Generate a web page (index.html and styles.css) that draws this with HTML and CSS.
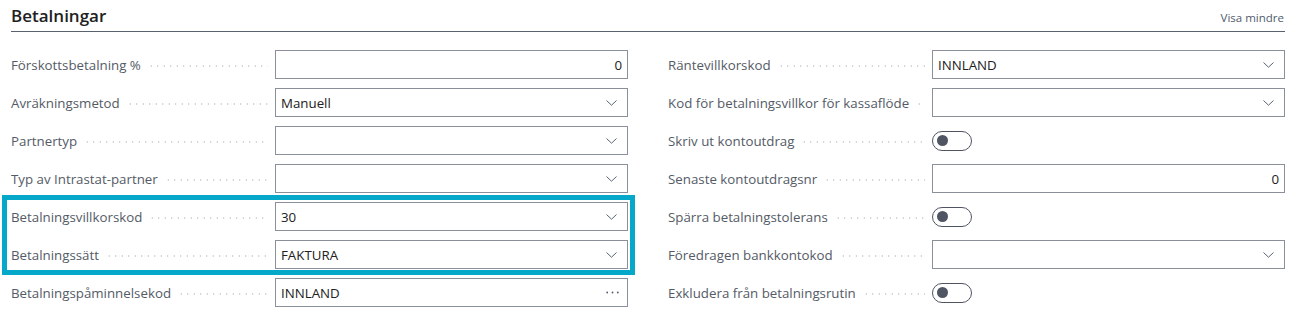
FILE: index.html
```html
<!DOCTYPE html>
<html lang="sv">
<head>
<meta charset="utf-8">
<title>Betalningar</title>
<link rel="stylesheet" href="styles.css">
</head>
<body>
<div class="page">
  <header class="section-head">
    <h2 class="title">Betalningar</h2>
    <a class="more">Visa mindre</a>
  </header>
  <div class="grid">
    <div class="col">
      <div class="row">
        <div class="cap"><span class="label">Förskottsbetalning %</span><span class="lead"></span></div>
        <div class="field num"><span class="val">0</span></div>
      </div>
      <div class="row">
        <div class="cap"><span class="label">Avräkningsmetod</span><span class="lead"></span></div>
        <div class="field"><span class="val">Manuell</span><svg class="chev" viewBox="0 0 11 6"><polyline points="0.5,0.5 5.5,5.2 10.5,0.5"/></svg></div>
      </div>
      <div class="row">
        <div class="cap"><span class="label">Partnertyp</span><span class="lead"></span></div>
        <div class="field"><span class="val"></span><svg class="chev" viewBox="0 0 11 6"><polyline points="0.5,0.5 5.5,5.2 10.5,0.5"/></svg></div>
      </div>
      <div class="row">
        <div class="cap"><span class="label">Typ av Intrastat-partner</span><span class="lead"></span></div>
        <div class="field"><span class="val"></span><svg class="chev" viewBox="0 0 11 6"><polyline points="0.5,0.5 5.5,5.2 10.5,0.5"/></svg></div>
      </div>
      <div class="highlight">
        <div class="row">
          <div class="cap"><span class="label">Betalningsvillkorskod</span><span class="lead"></span></div>
          <div class="field"><span class="val">30</span><svg class="chev" viewBox="0 0 11 6"><polyline points="0.5,0.5 5.5,5.2 10.5,0.5"/></svg></div>
        </div>
        <div class="row">
          <div class="cap"><span class="label">Betalningssätt</span><span class="lead"></span></div>
          <div class="field"><span class="val">FAKTURA</span><svg class="chev" viewBox="0 0 11 6"><polyline points="0.5,0.5 5.5,5.2 10.5,0.5"/></svg></div>
        </div>
      </div>
      <div class="row">
        <div class="cap"><span class="label">Betalningspåminnelsekod</span><span class="lead"></span></div>
        <div class="field"><span class="val">INNLAND</span><svg class="dots" viewBox="0 0 13 3"><circle cx="1.2" cy="1.5" r="0.9"/><circle cx="6.5" cy="1.5" r="0.9"/><circle cx="11.8" cy="1.5" r="0.9"/></svg></div>
      </div>
    </div>
    <div class="col">
      <div class="row">
        <div class="cap"><span class="label">Räntevillkorskod</span><span class="lead"></span></div>
        <div class="field"><span class="val">INNLAND</span><svg class="chev" viewBox="0 0 11 6"><polyline points="0.5,0.5 5.5,5.2 10.5,0.5"/></svg></div>
      </div>
      <div class="row">
        <div class="cap"><span class="label">Kod för betalningsvillkor för kassaflöde</span><span class="lead"></span></div>
        <div class="field"><span class="val"></span><svg class="chev" viewBox="0 0 11 6"><polyline points="0.5,0.5 5.5,5.2 10.5,0.5"/></svg></div>
      </div>
      <div class="row">
        <div class="cap"><span class="label">Skriv ut kontoutdrag</span><span class="lead"></span></div>
        <div class="toggle-cell"><span class="toggle"><span class="knob"></span></span></div>
      </div>
      <div class="row">
        <div class="cap"><span class="label">Senaste kontoutdragsnr</span><span class="lead"></span></div>
        <div class="field num"><span class="val">0</span></div>
      </div>
      <div class="row">
        <div class="cap"><span class="label">Spärra betalningstolerans</span><span class="lead"></span></div>
        <div class="toggle-cell"><span class="toggle"><span class="knob"></span></span></div>
      </div>
      <div class="row">
        <div class="cap"><span class="label">Föredragen bankkontokod</span><span class="lead"></span></div>
        <div class="field"><span class="val"></span><svg class="chev" viewBox="0 0 11 6"><polyline points="0.5,0.5 5.5,5.2 10.5,0.5"/></svg></div>
      </div>
      <div class="row">
        <div class="cap"><span class="label">Exkludera från betalningsrutin</span><span class="lead"></span></div>
        <div class="toggle-cell"><span class="toggle"><span class="knob"></span></span></div>
      </div>
    </div>
  </div>
</div>
</body>
</html>
```

FILE: styles.css
```css
* { box-sizing: border-box; }
html, body { margin: 0; padding: 0; background: #ffffff; }
body {
  font-family: "Open Sans", "Noto Sans", "Liberation Sans", sans-serif;
  color: #212121;
}
.page {
  padding: 0 4px 0 11px;
}
.section-head {
  display: flex;
  justify-content: space-between;
  align-items: baseline;
  padding: 4px 0 3px 0;
  border-bottom: 1px solid #5a626d;
}
.title {
  margin: 0;
  font-size: 17px;
  line-height: 24px;
  font-weight: 600;
  color: #212121;
}
.more {
  font-size: 11.5px;
  color: #505c6d;
  margin-right: 1px;
}
.grid {
  display: grid;
  grid-template-columns: 1fr 1fr;
  column-gap: 40px;
  margin-top: 18px;
}
.col {
  display: flex;
  flex-direction: column;
  gap: 9px;
}
.row {
  display: grid;
  grid-template-columns: 264px 1fr;
  height: 29px;
  align-items: center;
}
.cap {
  display: flex;
  align-items: center;
  min-width: 0;
}
.label {
  font-size: 13.3px;
  color: #545b66;
  white-space: nowrap;
}
.lead {
  flex: 1;
  height: 2px;
  margin: 3px 7px 0 7px;
  background-image: radial-gradient(circle, #c3c7cc 0.7px, transparent 0.9px);
  background-size: 6.5px 2px;
  background-repeat: repeat-x;
  background-position: left center;
}
.field {
  height: 29px;
  border: 1px solid #8a9099;
  display: flex;
  align-items: center;
  justify-content: space-between;
  padding: 0 10px 0 5px;
  font-size: 13.3px;
  color: #212121;
}
.field.num {
  justify-content: flex-end;
  padding-right: 5px;
}
.chev {
  width: 11px;
  height: 6px;
  fill: none;
  stroke: #5a6474;
  stroke-width: 1;
}
.dots {
  width: 13px;
  height: 3px;
  fill: #505c6d;
  margin-right: -2px;
}
.toggle-cell {
  display: flex;
  align-items: center;
}
.toggle {
  width: 40px;
  height: 20px;
  border: 1px solid #4f5563;
  border-radius: 10px;
  display: flex;
  align-items: center;
  padding-left: 4px;
}
.knob {
  width: 11px;
  height: 11px;
  border-radius: 50%;
  background: #4f5563;
}
.highlight {
  display: flex;
  flex-direction: column;
  gap: 9px;
  border: 5px solid #05a8c8;
  margin: -7px -7px -6px -9px;
  padding: 2px 2px 1px 4px;
}
```
